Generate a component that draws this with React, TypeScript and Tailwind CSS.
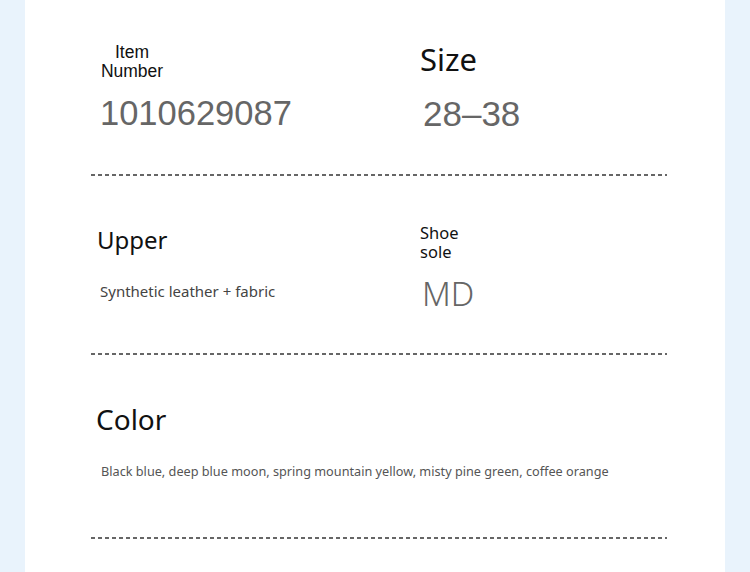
const dash =
  "h-[2px] w-[576px] bg-[repeating-linear-gradient(to_right,#666_0px,#666_4px,transparent_4px,transparent_7px)]";

const Divider = ({ top }: { top: string }) => <div className={`${dash} ${top}`} />;

const App = () => {
  return (
    <div className="min-h-screen bg-[#e9f3fc]">
      <div className="mx-[25px] min-h-[572px] bg-white pl-[66px] text-[#111]">
        {/* item number / size */}
        <div className="flex items-start">
          <div className="w-[329px] pl-[9px] pt-[43px]">
            <div className="w-[64px] text-center font-['Liberation_Sans',Arial,sans-serif] text-[17.5px] leading-[19px]">
              Item Number
            </div>
            <div className="mt-[15px] font-['Liberation_Sans',Arial,sans-serif] text-[34.5px] leading-[35px] text-[#666]">
              1010629087
            </div>
          </div>
          <div className="pt-[44px]">
            <div className="font-['Noto_Sans',sans-serif] text-[31px] leading-[31px]">Size</div>
            <div className="mt-[21px] pl-[3px] font-['Liberation_Sans',Arial,sans-serif] text-[35px] leading-[35px] text-[#666]">
              28–38
            </div>
          </div>
        </div>

        <Divider top="mt-[43px]" />

        {/* upper / sole */}
        <div className="flex items-start">
          <div className="w-[329px] pl-[6px] pt-[52px]">
            <div className="font-['Noto_Sans',sans-serif] text-[24px] leading-[24px]">Upper</div>
            <div className="mt-[32px] pl-[3px] font-['Noto_Sans',sans-serif] text-[15px] leading-[15px] text-[#444]">
              Synthetic leather + fabric
            </div>
          </div>
          <div className="pt-[47px]">
            <div className="w-[50px] font-['Noto_Sans',sans-serif] text-[16.5px] leading-[19px]">Shoe sole</div>
            <div className="mt-[16px] pl-[2px] font-['Noto_Sans',sans-serif] text-[33px] font-light leading-[33px] text-[#666]">
              MD
            </div>
          </div>
        </div>

        <Divider top="mt-[43px]" />

        {/* color */}
        <div className="pl-[5px] pt-[50px]">
          <div className="font-['Noto_Sans',sans-serif] text-[28px] leading-[28px]">Color</div>
          <div className="mt-[32px] pl-[5px] font-['Noto_Sans',sans-serif] text-[12.7px] leading-[13px] text-[#555]">
            Black blue, deep blue moon, spring mountain yellow, misty pine green, coffee orange
          </div>
        </div>

        <Divider top="mt-[59px]" />
      </div>
    </div>
  );
};

export default App;
